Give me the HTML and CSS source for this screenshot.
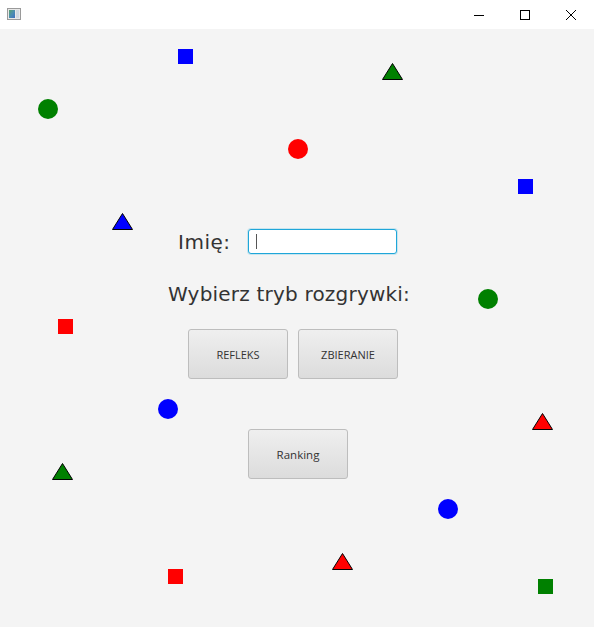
FILE: index.html
```html
<!DOCTYPE html>
<html lang="pl">
<head>
<meta charset="utf-8">
<title>Gra</title>
<link rel="stylesheet" href="styles.css">
</head>
<body>
<div class="window">
  <header class="titlebar">
    <svg class="app-icon" width="16" height="16" viewBox="0 0 16 16">
      <defs>
        <linearGradient id="ig" x1="0" y1="0" x2="1" y2="1">
          <stop offset="0" stop-color="#5aa06a"/>
          <stop offset="0.5" stop-color="#4a8fb0"/>
          <stop offset="1" stop-color="#3f6fc0"/>
        </linearGradient>
      </defs>
      <rect x="1.5" y="2.5" width="13" height="11" fill="#e8e8e8" stroke="#9a9a9a"/>
      <rect x="3" y="4" width="6" height="8" fill="url(#ig)"/>
      <rect x="10" y="4" width="3" height="8" fill="#cfd8e0"/>
    </svg>
    <div class="controls">
      <span class="ctl"><svg width="12" height="12" viewBox="0 0 12 12"><path d="M1 6.5h10" stroke="#000" stroke-width="1"/></svg></span>
      <span class="ctl"><svg width="12" height="12" viewBox="0 0 12 12"><rect x="1.5" y="1.5" width="9" height="9" fill="none" stroke="#000"/></svg></span>
      <span class="ctl"><svg width="12" height="12" viewBox="0 0 12 12"><path d="M1 1L11 11M11 1L1 11" stroke="#000" stroke-width="1"/></svg></span>
    </div>
  </header>

  <main class="stage">
    <svg class="shapes" width="594" height="598" viewBox="0 29 594 598">
      <g stroke="#000" stroke-width="1">
        <polygon points="392.5,63.5 402.5,79.5 382.5,79.5" fill="#008000"/>
        <polygon points="122.5,213.5 132.5,229.5 112.5,229.5" fill="#0000ff"/>
        <polygon points="542.5,413.5 552.5,429.5 532.5,429.5" fill="#ff0000"/>
        <polygon points="62.5,463.5 72.5,479.5 52.5,479.5" fill="#008000"/>
        <polygon points="342.5,553.5 352.5,569.5 332.5,569.5" fill="#ff0000"/>
      </g>
      <rect x="178" y="49" width="15" height="15" fill="#0000ff"/>
      <rect x="518" y="179" width="15" height="15" fill="#0000ff"/>
      <rect x="58" y="319" width="15" height="15" fill="#ff0000"/>
      <rect x="168" y="569" width="15" height="15" fill="#ff0000"/>
      <rect x="538" y="579" width="15" height="15" fill="#008000"/>
      <circle cx="48" cy="109" r="10" fill="#008000"/>
      <circle cx="298" cy="149" r="10" fill="#ff0000"/>
      <circle cx="488" cy="299" r="10" fill="#008000"/>
      <circle cx="168" cy="409" r="10" fill="#0000ff"/>
      <circle cx="448" cy="509" r="10" fill="#0000ff"/>
    </svg>

    <div class="menu">
      <div class="name-row">
        <label class="label" for="name">Imię:</label>
        <div class="field"><span class="caret"></span></div>
      </div>
      <p class="prompt">Wybierz tryb rozgrywki:</p>
      <div class="modes">
        <button class="btn">REFLEKS</button>
        <button class="btn">ZBIERANIE</button>
      </div>
      <button class="btn ranking">Ranking</button>
    </div>
  </main>
</div>
</body>
</html>
```

FILE: styles.css
```css
html, body {
  margin: 0;
  padding: 0;
}
body {
  width: 594px;
  height: 627px;
  overflow: hidden;
  background: #f4f4f4;
  font-family: "DejaVu Sans", Verdana, sans-serif;
  color: #333333;
}
.window {
  display: flex;
  flex-direction: column;
  height: 627px;
}
.titlebar {
  height: 29px;
  background: #ffffff;
  display: flex;
  align-items: center;
  justify-content: space-between;
  flex: none;
}
.app-icon {
  margin-left: 6px;
  margin-top: -2px;
}
.controls {
  display: flex;
  height: 100%;
}
.ctl {
  width: 46px;
  height: 29px;
  display: flex;
  align-items: center;
  justify-content: center;
}
.stage {
  position: relative;
  flex: 1;
}
.shapes {
  position: absolute;
  left: 0;
  top: 0;
}
.menu {
  position: relative;
  display: flex;
  flex-direction: column;
  align-items: flex-start;
  padding-top: 200px;
}
.name-row {
  display: flex;
  align-items: center;
  margin-left: 178px;
  height: 25px;
}
.label {
  font-size: 20px;
  letter-spacing: 0.5px;
  width: 70px;
  line-height: 24px;
  margin-top: 1px;
}
.field {
  width: 147px;
  height: 23px;
  background: #ffffff;
  border: 1px solid #1fa6d9;
  border-radius: 3px;
  box-shadow: 0 0 0 1px rgba(3, 158, 211, 0.18);
  display: flex;
  align-items: center;
}
.caret {
  display: block;
  width: 1px;
  height: 15px;
  background: #555;
  margin-left: 7px;
}
.prompt {
  margin: 28px 0 0 168px;
  font-size: 20px;
  letter-spacing: 0.2px;
  line-height: 24px;
  white-space: nowrap;
}
.modes {
  display: flex;
  gap: 10px;
  margin: 23px 0 0 188px;
}
.btn {
  width: 100px;
  height: 50px;
  box-sizing: border-box;
  border: 1px solid #bdbdbd;
  border-radius: 3px;
  background: linear-gradient(#efefef, #dcdcdc);
  font-family: "Open Sans", "Segoe UI", sans-serif;
  font-size: 11px;
  color: #333333;
  padding: 0;
}
.ranking {
  margin: 50px 0 0 248px;
  font-size: 11.5px;
}
```
